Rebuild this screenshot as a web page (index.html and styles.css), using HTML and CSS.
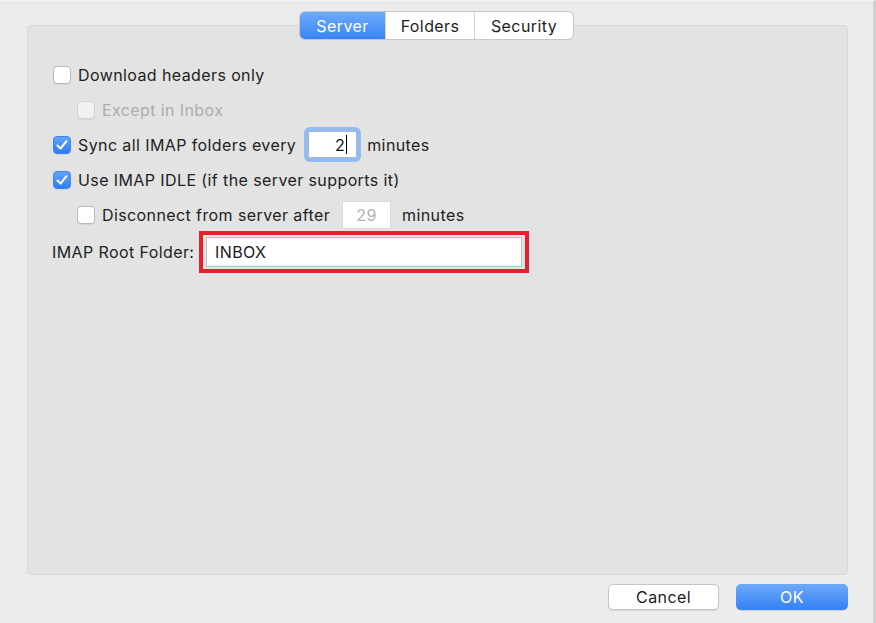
FILE: index.html
```html
<!DOCTYPE html>
<html>
<head>
<meta charset="utf-8">
<link rel="stylesheet" href="styles.css">
</head>
<body>
<div class="window">
  <div class="tabs-row">
    <div class="tabs">
      <div class="tab tab-active tab-server">Server</div>
      <div class="tab tab-folders">Folders</div>
      <div class="tab tab-security">Security</div>
    </div>
  </div>
  <div class="panel">
    <div class="row">
      <span class="cb"></span>
      <span class="label">Download headers only</span>
    </div>
    <div class="row indent disabled">
      <span class="cb cb-disabled"></span>
      <span class="label">Except in Inbox</span>
    </div>
    <div class="row">
      <span class="cb cb-checked"><svg viewBox="0 0 18 18" width="18" height="18"><polyline points="4.5,9.5 7.6,12.6 13.4,5.2" fill="none" stroke="#fff" stroke-width="2" stroke-linecap="round" stroke-linejoin="round"/></svg></span>
      <span class="label">Sync all IMAP folders every</span>
      <span class="focus-ring"><span class="num-field"><span class="num">2</span><span class="caret"></span></span></span>
      <span class="label">minutes</span>
    </div>
    <div class="row">
      <span class="cb cb-checked"><svg viewBox="0 0 18 18" width="18" height="18"><polyline points="4.5,9.5 7.6,12.6 13.4,5.2" fill="none" stroke="#fff" stroke-width="2" stroke-linecap="round" stroke-linejoin="round"/></svg></span>
      <span class="label">Use IMAP IDLE (if the server supports it)</span>
    </div>
    <div class="row indent">
      <span class="cb"></span>
      <span class="label">Disconnect from server after</span>
      <span class="num-field num-disabled">29</span>
      <span class="label">minutes</span>
    </div>
    <div class="row row-root">
      <span class="label root-label">IMAP Root Folder:</span>
      <span class="highlight"><span class="text-field">INBOX</span></span>
    </div>
  </div>
  <div class="buttons">
    <div class="btn btn-cancel">Cancel</div>
    <div class="btn btn-ok">OK</div>
  </div>
</div>
</body>
</html>
```
FILE: styles.css
```css
html, body {
  margin: 0;
  padding: 0;
}
body {
  width: 876px;
  height: 623px;
  overflow: hidden;
  background: #ececec;
  font-family: "Inter", "Liberation Sans", sans-serif;
  font-size: 16px;
  letter-spacing: 0.4px;
  color: #222;
}
.window {
  width: 876px;
  height: 623px;
  border-right: 3px solid #d2d2d2;
  background: #ececec;
  border-top: 1px solid #f3f3f3;
  box-sizing: border-box;
}
.tabs-row {
  display: flex;
  justify-content: center;
  padding-top: 11px;
  width: 873px;
  position: relative;
  z-index: 2;
}
.tabs {
  display: flex;
  height: 27px;
  border-radius: 5px;
  background: #fff;
  box-shadow: 0 0 0 1px #c8c8c8, 0 1px 1px rgba(0,0,0,0.12);
  overflow: hidden;
}
.tab {
  display: flex;
  align-items: center;
  justify-content: center;
  height: 27px;
  color: #1d1d1d;
}
.tab + .tab {
  border-left: 1px solid #d6d6d6;
}
.tab-server { width: 85px; }
.tab-folders { width: 88px; }
.tab-security { width: 98px; }
.tab-active {
  background: linear-gradient(#6eaafb, #3a84f6);
  color: #fff;
}
.panel {
  margin: -14px 0 0 27px;
  width: 821px;
  height: 550px;
  box-sizing: border-box;
  background: #e3e3e3;
  border: 1px solid #d8d8d8;
  border-radius: 4px;
  padding: 31px 0 0 25px;
}
.row {
  display: flex;
  align-items: center;
  height: 35px;
}
.indent {
  padding-left: 24px;
}
.cb {
  width: 18px;
  height: 18px;
  box-sizing: border-box;
  border-radius: 4px;
  background: #fff;
  border: 1px solid #b9b9b9;
  box-shadow: 0 1px 0 rgba(0,0,0,0.06);
  margin-right: 7px;
  flex: none;
  display: flex;
}
.cb-disabled {
  background: #f1f1f1;
  border-color: #d2d2d2;
}
.cb-checked {
  background: linear-gradient(#63a4fa, #2e7cf5);
  border-color: #3f83ee;
}
.cb-checked svg {
  margin: -1px;
}
.disabled .label {
  color: #acacac;
}
.focus-ring {
  display: flex;
  margin-left: 8px;
  margin-right: 6px;
  padding: 4px;
  border-radius: 6px;
  background: #93bcf3;
}
.num-field {
  width: 49px;
  height: 27px;
  box-sizing: border-box;
  background: #fff;
  border: 1px solid #a8b8cc;
  display: flex;
  align-items: center;
  justify-content: flex-end;
  padding-right: 9px;
  color: #111;
}
.caret {
  width: 1px;
  height: 19px;
  background: #000;
  margin-left: 1px;
}
.num-disabled {
  justify-content: center;
  padding: 0;
  height: 28px;
  border: 1px solid #dadada;
  color: #b2b2b2;
  margin-left: 12px;
  margin-right: 11px;
}
.row-root {
  height: 42px;
  margin-top: -1px;
}
.root-label {
  width: 147px;
  margin-left: -1px;
  flex: none;
  white-space: nowrap;
}
.highlight {
  display: flex;
  width: 330px;
  height: 42px;
  box-sizing: border-box;
  border: 4px solid #e5202b;
  padding: 2px 3px;
}
.text-field {
  flex: 1;
  background: #fff;
  border: 1px solid #c4c4c4;
  display: flex;
  align-items: center;
  padding-left: 8px;
  color: #1a1a1a;
}
.buttons {
  display: flex;
  justify-content: flex-end;
  gap: 17px;
  width: 848px;
  margin-top: 9px;
}
.btn {
  height: 26px;
  display: flex;
  align-items: center;
  justify-content: center;
  border-radius: 5px;
  box-sizing: border-box;
}
.btn-cancel {
  width: 111px;
  background: #fff;
  border: 1px solid #c6c6c6;
  box-shadow: 0 1px 1px rgba(0,0,0,0.1);
  color: #1d1d1d;
}
.btn-ok {
  width: 112px;
  background: linear-gradient(#6eaafb, #3580f6);
  color: #fff;
  box-shadow: 0 1px 1px rgba(0,0,0,0.12);
}
```
